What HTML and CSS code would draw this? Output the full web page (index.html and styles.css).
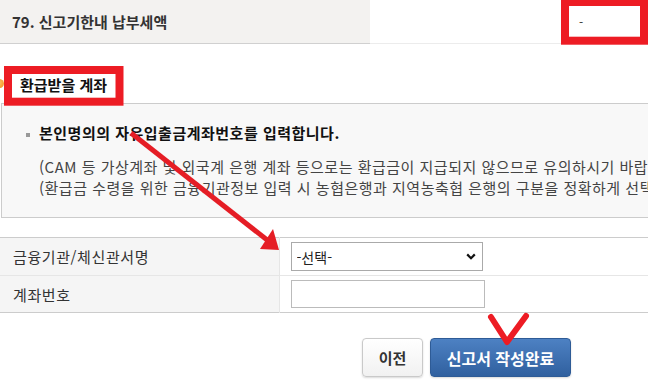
FILE: index.html
```html
<!DOCTYPE html>
<html lang="ko">
<head>
    <meta charset="UTF-8">
    <meta name="viewport" content="width=device-width, initial-scale=1.0">
    <title>환급받을 계좌</title>
    <link rel="stylesheet" href="styles.css">
</head>
<body>
    <div class="page">
        <div class="summary">
            <div class="summary-label">79. 신고기한내 납부세액</div>
            <div class="summary-value"><span class="amount">-</span></div>
        </div>

        <h3 class="section-title">환급받을 계좌</h3>

        <div class="notice">
            <p class="notice-head">본인명의의 자유입출금계좌번호를 입력합니다.</p>
            <p class="notice-text">(CAM 등 가상계좌 및 외국계 은행 계좌 등으로는 환급금이 지급되지 않으므로 유의하시기 바랍니다.)</p>
            <p class="notice-text">(환급금 수령을 위한 금융기관정보 입력 시 농협은행과 지역농축협 은행의 구분을 정확하게 선택하여 주시기 바랍니다.)</p>
        </div>

        <table class="account-table">
            <tr class="row-bank">
                <th>금융기관/체신관서명</th>
                <td>
                    <div class="select-wrap">
                        <select id="bankName">
                            <option>-선택-</option>
                        </select>
                        <svg class="chevron" width="10" height="7" viewBox="0 0 10 7">
                            <path d="M1.2 1.4 L5 5.2 L8.8 1.4" fill="none" stroke="#111" stroke-width="2.2"/>
                        </svg>
                    </div>
                </td>
            </tr>
            <tr class="row-account">
                <th>계좌번호</th>
                <td><input type="text" id="accountNo"></td>
            </tr>
        </table>

        <div class="actions">
            <button class="btn">이전</button>
            <button class="btn btn-primary">신고서 작성완료</button>
        </div>

        <!-- 캡처 위 빨간 표시 -->
        <svg class="marks" width="648" height="387" viewBox="0 0 648 387">
            <rect x="565" y="2" width="79" height="38.7" fill="none" stroke="#ed1c24" stroke-width="8"/>
            <rect x="8" y="70" width="111.5" height="31.7" fill="none" stroke="#ed1c24" stroke-width="8"/>
            <line x1="131" y1="133" x2="271" y2="243" stroke="#e51d25" stroke-width="5"/>
            <polygon points="279,250 260,249 273,229" fill="#e51d25"/>
            <path d="M491 317 L507 342 L526 316" fill="none" stroke="#ed1c24" stroke-width="6" stroke-linecap="round" stroke-linejoin="round"/>
        </svg>
    </div>
</body>
</html>
```

FILE: styles.css
```css
:root {
    --text-color: #333;
    --label-bg: #f3f2f0;
    --th-bg: #f5f5f5;
    --line-dark: #cccccc;
    --line-light: #e6e6e6;
}

* {
    margin: 0;
    padding: 0;
    box-sizing: border-box;
}

html, body {
    overflow: hidden;
}

body {
    font-family: "Noto Sans CJK KR", "Noto Sans", sans-serif;
    font-size: 15px;
    color: var(--text-color);
    background: #fff;
}

.page {
    position: relative;
    width: 648px;
    height: 387px;
    overflow: hidden;
}

/* 납부세액 행 */
.summary {
    display: flex;
    width: 700px;
    height: 44px;
}

.summary-label {
    width: 370px;
    background: var(--label-bg);
    border-bottom: 1px solid #d0d0d0;
    padding-left: 12px;
    line-height: 43px;
    font-size: 15px;
    font-weight: 700;
}

.summary-value {
    flex: 1;
    border-bottom: 1px solid #ececec;
}

.amount {
    display: inline-block;
    margin: 14px 0 0 209px;
    font-size: 12px;
    line-height: 16px;
}

/* 섹션 제목 */
.section-title {
    margin-top: 31px;
    margin-bottom: 8px;
    font-size: 15px;
    font-weight: 700;
    line-height: 20px;
    color: #111;
}

.section-title::before {
    content: "";
    display: inline-block;
    width: 9px;
    height: 9px;
    margin-left: -5px;
    margin-right: 16px;
    border-radius: 50%;
    background: radial-gradient(circle at 40% 40%, #ffc46b, #f28a12);
    vertical-align: 3px;
}

/* 안내 박스 */
.notice {
    width: 760px;
    margin-left: 1px;
    padding: 19px 0 19px 24px;
    background: #f8f8f8;
    border: 1px solid var(--line-dark);
    white-space: nowrap;
    letter-spacing: 0.5px;
}

.notice-head {
    margin-bottom: 13px;
    line-height: 20px;
    font-weight: 700;
    color: #111;
}

.notice-head::before {
    content: "";
    display: inline-block;
    width: 4px;
    height: 4px;
    margin-right: 9px;
    background: #999;
    vertical-align: middle;
}

.notice-text {
    padding-left: 13px;
    line-height: 21px;
    color: #444;
}

/* 계좌 입력 테이블 */
.account-table {
    width: 700px;
    margin-top: 19px;
    border-collapse: collapse;
    border-top: 1px solid var(--line-dark);
    border-bottom: 1px solid var(--line-dark);
}

.account-table th {
    width: 279px;
    padding-left: 13px;
    background: var(--th-bg);
    border-right: 1px solid var(--line-light);
    text-align: left;
    font-weight: 400;
    letter-spacing: 0.6px;
}

.account-table td {
    padding-left: 11px;
}

.row-bank {
    height: 38px;
    border-bottom: 1px solid var(--line-light);
}

.row-account {
    height: 37px;
}

.select-wrap {
    position: relative;
    width: 192px;
}

select {
    appearance: none;
    -webkit-appearance: none;
    display: block;
    width: 192px;
    height: 29px;
    padding-left: 5px;
    border: 1px solid #aaa;
    border-radius: 0;
    background: #fff;
    font-family: inherit;
    font-size: 14px;
    color: #222;
}

.chevron {
    position: absolute;
    right: 7px;
    top: 11px;
}

input[type="text"] {
    display: block;
    width: 194px;
    height: 28px;
    border: 1px solid #bbb;
    background: #fff;
}

/* 버튼 */
.actions {
    display: flex;
    justify-content: flex-end;
    gap: 7px;
    margin-top: 25px;
    padding-right: 77px;
}

.btn {
    width: 61px;
    height: 39px;
    padding: 0;
    border: 1px solid #c9c9c9;
    border-radius: 4px;
    background: linear-gradient(#ffffff, #f1f1f1);
    box-shadow: 0 1px 2px rgba(0, 0, 0, 0.15);
    font-family: inherit;
    font-size: 15px;
    font-weight: 700;
    color: #333;
}

.btn-primary {
    width: 141px;
    border-color: #2e5b96;
    background: linear-gradient(#4d81c3, #30609f);
    font-size: 16px;
    color: #fff;
}

.marks {
    position: absolute;
    top: 0;
    left: 0;
    pointer-events: none;
}
```
